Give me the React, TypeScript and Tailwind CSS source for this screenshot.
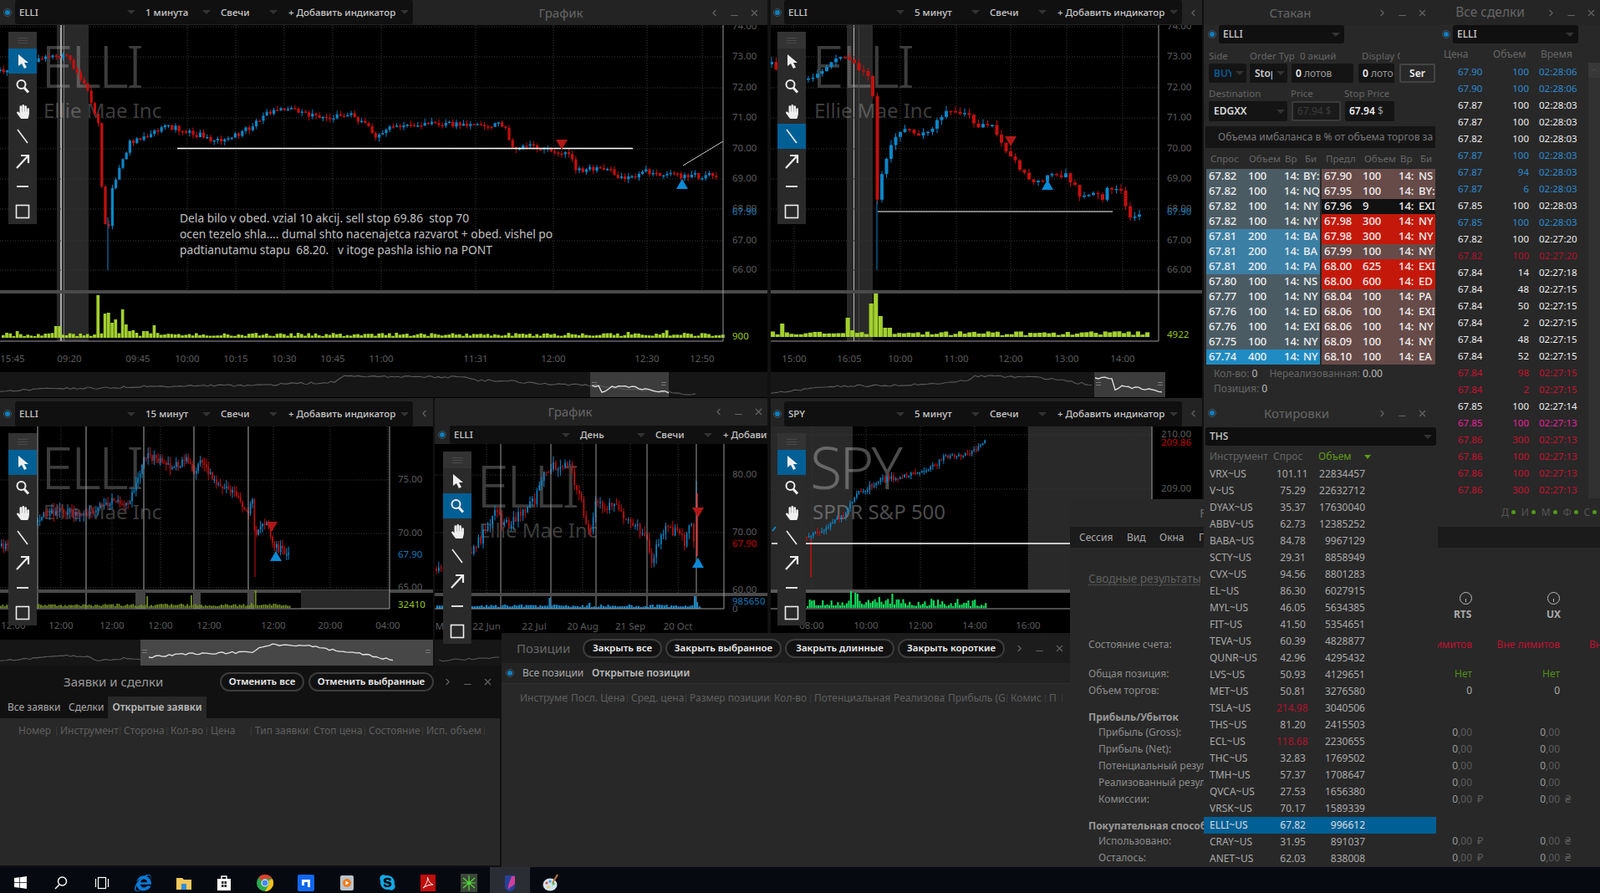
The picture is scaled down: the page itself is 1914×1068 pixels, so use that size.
import { ReactNode } from "react";
import { ChevronLeft, ChevronRight, Minus, X } from "lucide-react";
import { FaWindows, FaInternetExplorer, FaSkype, FaHandPaper } from "react-icons/fa";

type Pt = [number, number];

const BLUE = "#0b86c8";
const RED = "#c40f0f";

function lcg(seed: number) {
  return () => {
    seed = (Math.imul(seed, 1664525) + 1013904223) >>> 0;
    return ((seed >>> 8) % 10000) / 10000;
  };
}

function interp(pts: Pt[], x: number) {
  for (let i = 1; i < pts.length; i++) {
    if (x <= pts[i][0]) {
      const [x0, y0] = pts[i - 1];
      const [x1, y1] = pts[i];
      return y0 + ((y1 - y0) * (x - x0)) / Math.max(x1 - x0, 0.01);
    }
  }
  return pts[pts.length - 1][1];
}

// roughens a hand-placed line so the navigator looks like real price data
function jag(line: string, seed: number) {
  const pts = line.split(" ").map((p) => p.split(",").map(Number) as Pt);
  const r = lcg(seed);
  const out: string[] = [];
  for (let x = pts[0][0]; x <= pts[pts.length - 1][0]; x += 4) {
    out.push(`${x},${(interp(pts, x) + (r() - 0.5) * 2.4).toFixed(1)}`);
  }
  return out.join(" ");
}

function Candles({ pts, step, w, seed, noise, wick }: { pts: Pt[]; step: number; w: number; seed: number; noise: number; wick: number }) {
  const r = lcg(seed);
  const out: ReactNode[] = [];
  let prev = pts[0][1];
  for (let x = pts[0][0]; x <= pts[pts.length - 1][0]; x += step) {
    const c = interp(pts, x) + (r() - 0.5) * noise;
    const top = Math.min(prev, c);
    const bot = Math.max(prev, c);
    const col = c < prev ? BLUE : RED;
    out.push(
      <g key={x}>
        <line x1={x} x2={x} y1={top - r() * wick} y2={bot + r() * wick} stroke={col} strokeWidth={1} />
        <rect x={x - w / 2} y={top} width={w} height={Math.max(bot - top, 1.5)} fill={col} />
      </g>
    );
    prev = c;
  }
  return <g>{out}</g>;
}

function Volume({ x0, x1, step, base, color, seed, amp, peaks }: { x0: number; x1: number; step: number; base: number; color: string; seed: number; amp: number; peaks: Pt[] }) {
  const r = lcg(seed);
  const out: ReactNode[] = [];
  for (let x = x0; x < x1; x += step) {
    let h = 2 + r() * amp;
    for (const p of peaks) if (Math.abs(x - p[0]) <= step / 2) h = p[1];
    out.push(<rect key={x} x={x} y={base - h} width={step - 0.5} height={h} fill={color} />);
  }
  return <g>{out}</g>;
}

function Ax({ x, y, c = "#5c5c5c", a = "start", children }: { x: number; y: number; c?: string; a?: "start" | "middle"; children: ReactNode }) {
  return (
    <text x={x} y={y} fill={c} fontSize={11.5} textAnchor={a} dominantBaseline="middle">
      {children}
    </text>
  );
}

function Tri({ x, y, up }: { x: number; y: number; up?: boolean }) {
  return up ? <polygon points={`${x - 7},${y + 12} ${x + 7},${y + 12} ${x},${y}`} fill="#0b8ad8" /> : <polygon points={`${x - 7},${y} ${x + 7},${y} ${x},${y + 12}`} fill="#b01818" />;
}

function Grid({ xs, ys, x0, x1, y0, y1 }: { xs: number[]; ys: number[]; x0: number; x1: number; y0: number; y1: number }) {
  return (
    <g stroke="#3a3a3a" strokeDasharray="1 2" strokeWidth={1}>
      {ys.map((y) => <line key={y} x1={x0} x2={x1} y1={y} y2={y} />)}
      {xs.map((x) => <line key={x} x1={x} x2={x} y1={y0} y2={y1} />)}
    </g>
  );
}

function Nav({ x, y, w, h, from, to, gray, white, fill = "#3c3c3c" }: { x: number; y: number; w: number; h: number; from: number; to: number; gray: string; white: string; fill?: string }) {
  return (
    <g>
      <rect x={x} y={y} width={w} height={h} fill="#161616" />
      <rect x={from} y={y} width={to - from} height={h} fill={fill} />
      <polyline points={jag(gray, 7)} fill="none" stroke="#5a5a5a" strokeWidth={1.1} />
      <polyline points={jag(white, 13)} fill="none" stroke="#e4e4e4" strokeWidth={1.3} />
      <rect x={from + 2} y={y + 12} width={6} height={1} fill="#777" />
      <rect x={from + 2} y={y + 15} width={6} height={1} fill="#777" />
      <rect x={to - 9} y={y + 12} width={6} height={1} fill="#777" />
      <rect x={to - 9} y={y + 15} width={6} height={1} fill="#777" />
    </g>
  );
}

function Radio() {
  return (
    <span className="flex h-[10px] w-[10px] items-center justify-center rounded-full border border-[#3d5564]">
      <span className="h-[6px] w-[6px] rounded-full bg-[#0f7fc0]" />
    </span>
  );
}

function Caret() {
  return <span className="h-0 w-0 border-x-[5px] border-t-[5px] border-x-transparent border-t-[#333]" />;
}

function Controls({ left }: { left?: boolean }) {
  return (
    <div className="flex items-center gap-[11px] text-[#666]">
      {left ? <ChevronLeft size={13} /> : <ChevronRight size={13} />}
      <Minus size={13} className="translate-y-[3px]" />
      <X size={13} />
    </div>
  );
}

function Selector({ sym, tf, className = "" }: { sym: string; tf: string; className?: string }) {
  const seg = "flex h-full items-center justify-between";
  return (
    <div className={`flex shrink-0 rounded-[3px] bg-[#101010] text-[11.5px] font-medium text-[#c8c8c8] ${className}`}>
      <div className={`${seg} w-[148px] pl-[5px] pr-[4px]`}><span>{sym}</span><Caret /></div>
      <div className={`${seg} w-[90px] pl-[8px] pr-[4px]`}><span>{tf}</span><Caret /></div>
      <div className={`${seg} w-[80px] pl-[8px] pr-[4px]`}><span>Свечи</span><Caret /></div>
      <div className={`${seg} w-[158px] pl-[9px] pr-[5px] whitespace-nowrap`}><span>+ Добавить индикатор</span><Caret /></div>
    </div>
  );
}

function Tool({ i, on }: { i: number; on: boolean }) {
  const icons = [
    <svg key="a" width="20" height="20" viewBox="0 0 20 20"><polygon points="5,2 5,16 9,13 12,19 15,17.5 12,12 17,12" fill="#eee" /></svg>,
    <svg key="b" width="20" height="20" viewBox="0 0 20 20" fill="none" stroke="#eee"><circle cx="8.5" cy="8" r="5" strokeWidth="2" /><line x1="12" y1="12" x2="17" y2="17.5" strokeWidth="3" /></svg>,
    <FaHandPaper key="c" size={17} color="#eee" />,
    <svg key="d" width="20" height="20" viewBox="0 0 20 20"><line x1="4" y1="2" x2="16" y2="18" stroke="#eee" strokeWidth="1.6" /></svg>,
    <svg key="e" width="20" height="20" viewBox="0 0 20 20"><path d="M3 18 L16 4 M8 3 H17 V12" stroke="#eee" strokeWidth="2.2" fill="none" /></svg>,
    <svg key="f" width="20" height="20" viewBox="0 0 20 20"><rect x="3" y="9" width="14" height="2" fill="#ddd" /></svg>,
    <svg key="g" width="20" height="20" viewBox="0 0 20 20"><rect x="2.5" y="2.5" width="15" height="15" fill="none" stroke="#eee" strokeWidth="1.6" /></svg>,
  ];
  return <div className={`flex h-[30px] items-center justify-center ${on ? "bg-[#005f95]" : ""}`}>{icons[i]}</div>;
}

function Toolbar({ className, sel }: { className: string; sel: number }) {
  return (
    <div className={`absolute w-[34px] bg-[#2a2a2a] ${className}`}>
      <div className="flex h-[20px] flex-col items-center justify-center gap-[2px] bg-[#333]">
        <span className="h-px w-[12px] bg-[#4a4a4a]" />
        <span className="h-px w-[12px] bg-[#4a4a4a]" />
        <span className="h-px w-[12px] bg-[#4a4a4a]" />
      </div>
      {[0, 1, 2, 3, 4, 5, 6].map((i) => <Tool key={i} i={i} on={i === sel} />)}
    </div>
  );
}

function Mark({ big, small, className }: { big: string; small: string; className: string }) {
  return (
    <div className={`absolute leading-none text-[#3c3c3c] ${className}`}>
      <div className="-ml-[4px] h-[66px] text-[70px] font-light leading-[66px] tracking-[-3px]">{big}</div>
      <div className="-ml-[1px] mt-[7px] text-[24px] leading-[28px] whitespace-nowrap">{small}</div>
    </div>
  );
}

const stack: [string, string, string, string, string, string, string, string][] = [
  ["67.82", "100", "14:", "BY:", "67.90", "100", "14:", "NS"],
  ["67.82", "100", "14:", "NQ", "67.95", "100", "14:", "BY:"],
  ["67.82", "100", "14:", "NY", "67.96", "9", "14:", "EXI"],
  ["67.82", "100", "14:", "NY", "67.98", "300", "14:", "NY"],
  ["67.81", "200", "14:", "BA", "67.98", "300", "14:", "NY"],
  ["67.81", "200", "14:", "BA", "67.99", "100", "14:", "NY"],
  ["67.81", "200", "14:", "PA", "68.00", "625", "14:", "EXI"],
  ["67.80", "100", "14:", "NS", "68.00", "600", "14:", "ED"],
  ["67.77", "100", "14:", "NY", "68.04", "100", "14:", "PA"],
  ["67.76", "100", "14:", "ED", "68.06", "100", "14:", "EXI"],
  ["67.76", "100", "14:", "EXI", "68.06", "100", "14:", "NY"],
  ["67.75", "100", "14:", "NY", "68.09", "100", "14:", "NY"],
  ["67.74", "400", "14:", "NY", "68.10", "100", "14:", "EA"],
];
const bidBg = ["bg-[#4b5b63]", "bg-[#4b5b63]", "bg-[#4b5b63]", "bg-[#4b5b63]", "bg-[#3b7fa5]", "bg-[#3b7fa5]", "bg-[#3b7fa5]", "bg-[#4b5b63]", "bg-[#4b5b63]", "bg-[#4b5b63]", "bg-[#4b5b63]", "bg-[#4b5b63]", "bg-[#1f8bc2]"];
const askBg = ["bg-[#664b49]", "bg-[#664b49]", "bg-[#111]", "bg-[#c4190a]", "bg-[#c4190a]", "bg-[#664b49]", "bg-[#c4190a]", "bg-[#c4190a]", "bg-[#664b49]", "bg-[#664b49]", "bg-[#664b49]", "bg-[#664b49]", "bg-[#664b49]"];

const trades: [string, string, string, string][] = [
  ["67.90", "100", "02:28:06", "text-[#2b8ad0]"],
  ["67.90", "100", "02:28:06", "text-[#2b8ad0]"],
  ["67.87", "100", "02:28:03", "text-[#eee]"],
  ["67.87", "100", "02:28:03", "text-[#eee]"],
  ["67.82", "100", "02:28:03", "text-[#eee]"],
  ["67.87", "100", "02:28:03", "text-[#2b8ad0]"],
  ["67.87", "94", "02:28:03", "text-[#2b8ad0]"],
  ["67.87", "6", "02:28:03", "text-[#2b8ad0]"],
  ["67.85", "100", "02:28:03", "text-[#eee]"],
  ["67.85", "100", "02:28:03", "text-[#2b8ad0]"],
  ["67.82", "100", "02:27:20", "text-[#eee]"],
  ["67.82", "100", "02:27:20", "text-[#b5102c]"],
  ["67.84", "14", "02:27:18", "text-[#eee]"],
  ["67.84", "48", "02:27:15", "text-[#eee]"],
  ["67.84", "50", "02:27:15", "text-[#eee]"],
  ["67.84", "2", "02:27:15", "text-[#eee]"],
  ["67.84", "48", "02:27:15", "text-[#eee]"],
  ["67.84", "52", "02:27:15", "text-[#eee]"],
  ["67.84", "98", "02:27:15", "text-[#c8102e]"],
  ["67.84", "2", "02:27:15", "text-[#c8102e]"],
  ["67.85", "100", "02:27:14", "text-[#eee]"],
  ["67.85", "100", "02:27:13", "text-[#e8209c]"],
  ["67.86", "300", "02:27:13", "text-[#c8102e]"],
  ["67.86", "100", "02:27:13", "text-[#c8102e]"],
  ["67.86", "100", "02:27:13", "text-[#c8102e]"],
  ["67.86", "300", "02:27:13", "text-[#c8102e]"],
];

const quotes: [string, string, string][] = [
  ["VRX~US", "101.11", "22834457"], ["V~US", "75.29", "22632712"], ["DYAX~US", "35.37", "17630040"], ["ABBV~US", "62.73", "12385252"],
  ["BABA~US", "84.78", "9967129"], ["SCTY~US", "29.31", "8858949"], ["CVX~US", "94.56", "8801283"], ["EL~US", "86.30", "6027915"],
  ["MYL~US", "46.05", "5634385"], ["FIT~US", "41.50", "5354651"], ["TEVA~US", "60.39", "4828877"], ["QUNR~US", "42.96", "4295432"],
  ["LVS~US", "50.93", "4129651"], ["MET~US", "50.81", "3276580"], ["TSLA~US", "214.98", "3040506"], ["THS~US", "81.20", "2415503"],
  ["ECL~US", "118.68", "2230655"], ["THC~US", "32.83", "1769502"], ["TMH~US", "57.37", "1708647"], ["QVCA~US", "27.53", "1656380"],
  ["VRSK~US", "70.17", "1589339"], ["ELLI~US", "67.82", "996612"], ["CRAY~US", "31.95", "891037"], ["ANET~US", "62.03", "838008"],
];

function Field({ className, children }: { className: string; children: ReactNode }) {
  return <div className={`flex h-[23px] items-center overflow-hidden rounded-[2px] bg-[#141414] ${className}`}>{children}</div>;
}

function Stakan() {
  return (
    <div className="absolute left-[1440px] top-0 flex h-[477px] w-[280px] flex-col bg-[#282828] text-[12px] text-[#666]">
      <div className="flex h-[30px] shrink-0 items-center bg-[#252525]">
        <div className="w-[207px] text-center text-[15px]">Стакан</div>
        <Controls />
      </div>
      <div className="flex h-[22px] shrink-0 items-center pl-[5px]">
        <Radio />
        <div className="ml-[3px] flex h-[22px] w-[150px] items-center justify-between rounded-[3px] bg-[#101010] px-[5px] font-medium text-[#ccc]"><span>ELLI</span><Caret /></div>
      </div>
      <div className="mt-[7px] flex h-[16px] shrink-0 items-center whitespace-nowrap text-[11.5px]">
        <div className="w-[55px] pl-[6px]">Side</div>
        <div className="w-[55px] overflow-hidden">Order Typ</div>
        <div className="ml-[5px] w-[74px]">0 акций</div>
        <div className="w-[46px] overflow-hidden">Display C</div>
      </div>
      <div className="mt-[1px] flex shrink-0 items-center pl-[6px] text-[12px] font-semibold">
        <Field className="w-[45px] justify-between pl-[6px] pr-[3px] text-[#055a90]"><span className="w-[21px] overflow-hidden">BUY</span><Caret /></Field>
        <Field className="ml-[4px] w-[45px] justify-between pl-[6px] pr-[3px] text-[#ccc]"><span className="w-[21px] overflow-hidden">Stop</span><Caret /></Field>
        <Field className="ml-[5px] w-[74px] pl-[5px] text-[#eee]">0&nbsp;<span className="font-normal text-[#999]">лотов</span></Field>
        <Field className="ml-[6px] w-[43px] pl-[5px] text-[#eee]">0&nbsp;<span className="font-normal text-[#999]">лото</span></Field>
        <div className="ml-[6px] flex h-[23px] w-[43px] items-center justify-center rounded-[2px] border-2 border-[#444] text-[#eee]">Ser</div>
      </div>
      <div className="mt-[5px] flex h-[16px] shrink-0 items-center text-[11.5px]">
        <div className="w-[104px] pl-[6px]">Destination</div>
        <div className="w-[64px]">Price</div>
        <div>Stop Price</div>
      </div>
      <div className="mt-[1px] flex shrink-0 items-center pl-[6px] font-semibold">
        <Field className="h-[24px] w-[94px] justify-between pl-[6px] pr-[3px] text-[#ddd]"><span>EDGXX</span><Caret /></Field>
        <div className="ml-[5px] flex h-[24px] w-[59px] items-center rounded-[2px] border-2 border-[#3a3a3a] bg-[#1a1a1a] pl-[5px] font-normal text-[#3a3a3a]">67.94 $</div>
        <Field className="ml-[5px] h-[24px] w-[59px] pl-[5px] text-[#eee]">67.94&nbsp;<span className="font-normal text-[#999]">$</span></Field>
      </div>
      <div className="ml-[2px] mt-[6px] flex h-[26px] w-[275px] shrink-0 items-center overflow-hidden whitespace-nowrap bg-[#151515] pl-[15px] text-[#777]">Объема имбаланса в % от объема торгов за день</div>
      <div className="mt-[4px] flex h-[18px] shrink-0 items-center whitespace-nowrap text-[11.5px]">
        <div className="w-[54px] pl-[8px]">Спрос</div>
        <div className="w-[43px] overflow-hidden">Объем</div>
        <div className="w-[24px]">Вр</div>
        <div className="w-[25px]">Би</div>
        <div className="w-[46px] overflow-hidden">Предл</div>
        <div className="w-[43px] overflow-hidden">Объем</div>
        <div className="w-[24px]">Вр</div>
        <div>Би</div>
      </div>
      <div className="mt-[3px] flex shrink-0 flex-col text-[13px] font-medium text-[#eee]">
        {stack.map((r, i) => (
          <div key={i} className="flex h-[18px] items-center whitespace-nowrap pl-[3px]">
            <div className={`flex h-full w-[136px] items-center overflow-hidden pl-[3px] ${bidBg[i]}`}>
              <span className="w-[47px]">{r[0]}</span><span className="w-[43px]">{r[1]}</span><span className="w-[23px]">{r[2]}</span><span>{r[3]}</span>
            </div>
            <div className={`ml-[2px] flex h-full w-[136px] items-center overflow-hidden pl-[3px] ${askBg[i]}`}>
              <span className="w-[46px]">{r[4]}</span><span className="w-[43px]">{r[5]}</span><span className="w-[24px]">{r[6]}</span><span>{r[7]}</span>
            </div>
          </div>
        ))}
      </div>
      <div className="mt-[2px] flex h-[18px] items-center gap-[14px] pl-[12px]">
        <span>Кол-во: <span className="text-[#bbb]">0</span></span>
        <span>Нереализованная: <span className="text-[#bbb]">0.00</span></span>
      </div>
      <div className="flex h-[18px] items-center pl-[12px]">Позиция:&nbsp;<span className="text-[#bbb]">0</span></div>
    </div>
  );
}

function Quotes() {
  return (
    <div className="absolute left-[1440px] top-[477px] flex h-[560px] w-[280px] flex-col bg-[#282828] text-[12px] text-[#aaa]">
      <div className="flex h-[34px] shrink-0 items-center pl-[5px] text-[#666]">
        <Radio />
        <div className="w-[192px] text-center text-[15px]">Котировки</div>
        <Controls />
      </div>
      <div className="ml-[2px] flex h-[22px] w-[276px] shrink-0 items-center justify-between rounded-[3px] bg-[#0f0f0f] px-[5px] font-medium text-[#ccc]"><span>THS</span><Caret /></div>
      <div className="mt-[2px] flex h-[22px] shrink-0 items-center text-[#666]">
        <span className="w-[83px] pl-[7px]">Инструмент</span>
        <span className="w-[54px]">Спрос</span>
        <span className="w-[55px] text-[#5f9a14]">Объем</span>
        <span className="h-0 w-0 border-x-[4px] border-t-[5px] border-x-transparent border-t-[#5f9a14]" />
      </div>
      <div className="flex flex-col">
        {quotes.map((q) => {
          const sel = q[0] === "ELLI~US";
          const hot = q[0] === "TSLA~US" || q[0] === "ECL~US";
          return (
            <div key={q[0]} className={`mr-[2px] flex h-[20px] items-center pl-[7px] ${sel ? "bg-[#005f95] text-[#ddd]" : ""}`}>
              <span className="w-[80px]">{q[0]}</span>
              <span className={`w-[35px] text-right ${hot ? "text-[#b5102c]" : ""}`}>{q[1]}</span>
              <span className="w-[71px] text-right">{q[2]}</span>
            </div>
          );
        })}
      </div>
    </div>
  );
}

function AllTrades() {
  return (
    <div className="absolute left-[1720px] top-0 flex h-[630px] w-[194px] flex-col bg-[#282828] text-[#666]">
      <div className="flex h-[30px] shrink-0 items-center bg-[#252525]">
        <div className="w-[125px] text-center text-[15.5px]">Все сделки</div>
        <div className="pl-[4px]"><Controls /></div>
      </div>
      <div className="flex h-[22px] shrink-0 items-center pl-[5px] text-[12px]">
        <Radio />
        <div className="ml-[3px] flex h-[22px] w-[150px] items-center justify-between rounded-[3px] bg-[#101010] px-[5px] font-medium text-[#ccc]"><span>ELLI</span><Caret /></div>
      </div>
      <div className="mt-[3px] flex h-[20px] shrink-0 items-center text-[12px]">
        <span className="w-[66px] pl-[7px]">Цена</span>
        <span className="w-[57px]">Объем</span>
        <span>Время</span>
      </div>
      <div className="flex h-[521px] shrink-0">
        <div className="flex w-[180px] flex-col pt-[1px]">
          {trades.map((t, i) => (
            <div key={i} className={`flex h-[20px] shrink-0 items-center text-[11.5px] ${t[3]}`}>
              <span className="ml-[24px] w-[30px]">{t[0]}</span>
              <span className="w-[55px] text-right">{t[1]}</span>
              <span className="ml-[12px]">{t[2]}</span>
            </div>
          ))}
        </div>
        <div className="w-[14px] bg-[#313131]">
          <div className="flex h-[18px] items-center justify-center bg-[#383838]"><ChevronLeft size={12} className="rotate-90 text-[#4c4c4c]" /></div>
        </div>
      </div>
      <div className="flex h-[33px] items-center gap-[7px] whitespace-nowrap pl-[76px] text-[12px] text-[#555]">
        {["Д", "И", "М", "Ф", "С"].map((l) => (
          <span key={l} className="flex items-center gap-[3px]">{l}<span className="h-[5px] w-[5px] rounded-full bg-[#4f9a16]" /></span>
        ))}
      </div>
    </div>
  );
}

function Dial() {
  return (
    <div className="flex h-[15px] w-[15px] items-end justify-center rounded-full border-[1.5px] border-[#bbb] pb-[2px]">
      <span className="h-[4px] w-px bg-[#bbb]" />
    </div>
  );
}

function Val({ v }: { v?: string }) {
  if (v === "0,00") return <span><span className="text-[#9a9a9a]">0</span><span className="text-[#5c5c5c]">,00</span></span>;
  return <span>{v}</span>;
}

function AcctRow({ label, mt = "", bold, ind, a, b, c, cls = "", sa = "", sb = "" }: { label?: string; mt?: string; bold?: boolean; ind?: boolean; a?: string; b?: string; c?: string; cls?: string; sa?: string; sb?: string }) {
  return (
    <div className={`flex h-[20px] shrink-0 items-center ${mt}`}>
      <div className={`w-[138px] shrink-0 overflow-hidden whitespace-nowrap ${ind ? "pl-[12px]" : ""} ${bold ? "font-bold text-[#999]" : "text-[#8c8c8c]"}`}>{label}</div>
      <div className="w-[280px] shrink-0" />
      <div className={`flex w-[41px] shrink-0 justify-end whitespace-nowrap ${cls}`}><Val v={a} /></div>
      <div className="w-[41px] shrink-0 pl-[6px] text-[13px] text-[#5c5c5c]">{sa}</div>
      <div className={`flex w-[64px] shrink-0 justify-end whitespace-nowrap ${cls}`}><Val v={b} /></div>
      <div className="w-[35px] shrink-0 pl-[6px] text-[13px] text-[#5c5c5c]">{sb}</div>
      {c ? <div className={`whitespace-nowrap ${cls}`}>{c}</div> : null}
    </div>
  );
}

function Account() {
  return (
    <div className="absolute left-[1280px] top-[597px] flex h-[440px] w-[634px] flex-col overflow-hidden bg-[#282828] text-[12px]">
      <div className="flex h-[33px] shrink-0 items-center pl-[155px] text-[#666]">
        <span className="text-[15px]">F</span>
      </div>
      <div className="flex h-[25px] shrink-0 items-center bg-[#1b1b1b] pl-[11px] text-[#aaa]">
        <span className="w-[57px]">Сессия</span>
        <span className="w-[39px]">Вид</span>
        <span className="w-[47px]">Окна</span>
        <span>Г</span>
      </div>
      <div className="flex flex-col pl-[22px]">
        <div className="mt-[27px] flex h-[20px] items-center whitespace-nowrap text-[13.5px] text-[#5f5f5f] underline decoration-dotted underline-offset-2">Сводные результаты</div>
        <div className="mt-[3px] flex h-[20px] items-center gap-[90px] pl-[444px]">
          <Dial />
          <Dial />
        </div>
        <div className="flex h-[20px] items-center pl-[437px] font-bold text-[#aaa]">
          <span className="w-[111px]">RTS</span>
          <span>UX</span>
        </div>
        <AcctRow mt="mt-[16px]" label="Состояние счета:" a="Вне лимитов" b="Вне лимитов" c="Вне лимитов" cls="text-[#c01030]" />
        <AcctRow mt="mt-[15px]" label="Общая позиция:" a="Нет" b="Нет" cls="text-[#4f8f14]" />
        <AcctRow label="Объем торгов:" a="0" b="0" cls="text-[#aaa]" />
        <AcctRow mt="mt-[12px]" label="Прибыль/Убыток" bold />
        <AcctRow mt="-mt-[2px]" ind label="Прибыль (Gross):" a="0,00" b="0,00" />
        <AcctRow ind label="Прибыль (Net):" a="0,00" b="0,00" />
        <AcctRow ind label="Потенциальный результат" a="0,00" b="0,00" />
        <AcctRow ind label="Реализованный результат" a="0,00" b="0,00" />
        <AcctRow ind label="Комиссии:" a="0,00" b="0,00" sa="₽" sb="₴" />
        <AcctRow mt="mt-[12px]" label="Покупательная способность" bold />
        <AcctRow mt="-mt-[2px]" ind label="Использовано:" a="0,00" b="0,00" sa="₽" sb="₴" />
        <AcctRow ind label="Осталось:" a="0,00" b="0,00" sa="₽" sb="₴" />
      </div>
    </div>
  );
}

function Pill({ w, children }: { w: string; children: ReactNode }) {
  return <div className={`flex h-[23px] items-center justify-center whitespace-nowrap rounded-full border-2 border-[#3c3c3c] bg-[#111] text-[11.5px] font-semibold text-[#eee] ${w}`}>{children}</div>;
}

function Col({ w, children }: { w: string; children: ReactNode }) {
  return (
    <div className={`flex shrink-0 items-center justify-between pr-[4px] ${w}`}>
      <span className="overflow-hidden">{children}</span>
      <span className="h-[9px] shrink-0 border-r border-dotted border-[#4a4a4a]" />
    </div>
  );
}

function Positions() {
  const cols: [string, string][] = [["Инструме", "w-[61px]"], ["Посл. Цена", "w-[72px]"], ["Сред. цена", "w-[70px]"], ["Размер позиции", "w-[101px]"], ["Кол-во", "w-[48px]"], ["Потенциальная", "w-[95px]"], ["Реализова", "w-[65px]"], ["Прибыль (G", "w-[75px]"], ["Комис", "w-[46px]"], ["П", "w-[20px]"]];
  return (
    <div className="absolute left-[600px] top-[757px] flex h-[280px] w-[680px] flex-col bg-[#282828] text-[12px]">
      <div className="flex h-[36px] shrink-0 items-center bg-[#1c1c1c] pl-[18px]">
        <span className="w-[79px] text-[15px] text-[#666]">Позиции</span>
        <div className="flex gap-[4px]">
          <Pill w="w-[95px]">Закрыть все</Pill>
          <Pill w="w-[139px]">Закрыть выбранное</Pill>
          <Pill w="w-[131px]">Закрыть длинные</Pill>
          <Pill w="w-[128px]">Закрыть короткие</Pill>
        </div>
        <div className="ml-[11px]"><Controls /></div>
      </div>
      <div className="flex h-[25px] shrink-0 items-center border-b border-[#303030] bg-[#232323] pl-[5px] text-[#aaa]">
        <Radio />
        <span className="ml-[10px] w-[83px]">Все позиции</span>
        <span className="font-semibold text-[#bbb]">Открытые позиции</span>
      </div>
      <div className="mt-[8px] flex h-[18px] items-center overflow-hidden whitespace-nowrap pl-[22px] text-[#5f5f5f]">
        {cols.map((c) => <Col key={c[0]} w={c[1]}>{c[0]}</Col>)}
      </div>
    </div>
  );
}

function Orders() {
  const cols: [string, string][] = [["Номер", "w-[50px]"], ["Инструмент", "w-[76px]"], ["Сторона", "w-[56px]"], ["Кол-во", "w-[48px]"], ["Цена", "w-[53px]"], ["Тип заявки", "w-[70px]"], ["Стоп цена", "w-[66px]"], ["Состояние", "w-[69px]"], ["Исп. объем", "w-[74px]"]];
  return (
    <div className="absolute left-0 top-[797px] flex h-[238px] w-[598px] flex-col bg-[#282828] text-[12px]">
      <div className="flex h-[36px] shrink-0 items-center bg-[#111] pl-[76px]">
        <span className="w-[187px] text-[15px] text-[#999]">Заявки и сделки</span>
        <div className="flex gap-[5px]">
          <Pill w="w-[101px]">Отменить все</Pill>
          <Pill w="w-[150px]">Отменить выбранные</Pill>
        </div>
        <div className="ml-[10px]"><Controls /></div>
      </div>
      <div className="flex h-[26px] shrink-0 items-center bg-[#111] pl-[9px] text-[#aaa]">
        <span className="w-[73px]">Все заявки</span>
        <span className="w-[47px]">Сделки</span>
        <span className="flex h-full w-[118px] items-center justify-center bg-[#282828] font-semibold text-[#bbb]">Открытые заявки</span>
      </div>
      <div className="mt-[6px] flex h-[18px] items-center whitespace-nowrap pl-[22px] text-[#5f5f5f]">
        {cols.map((c) => <Col key={c[0]} w={c[1]}>{c[0]}</Col>)}
      </div>
    </div>
  );
}

function Chart1() {
  const pts: Pt[] = [[0,85],[20,78],[40,75],[60,67],[78,66],[92,85],[105,110],[118,150],[124,265],[130,275],[135,222],[145,195],[155,170],[175,165],[195,150],[215,155],[250,165],[265,170],[295,155],[320,135],[340,130],[365,135],[395,142],[415,135],[440,150],[450,165],[470,150],[530,148],[600,150],[606,155],[612,175],[640,176],[660,178],[670,185],[680,180],[690,205],[720,200],[750,215],[770,205],[800,210],[860,210]];
  return (
    <svg className="relative h-full w-full" viewBox="0 30 918 446">
      <rect x="68" y="30" width="38" height="378" fill="#fff" fillOpacity="0.16" />
      <rect x="72" y="30" width="2" height="378" fill="#aaa" />
      <rect x="76" y="30" width="1" height="378" fill="#777" />
      <Grid xs={[224,282,340,398,456,569,662,774,840]} ys={[32,68,105,141,178,214,250,288,323]} x0={0} x1={865} y0={30} y1={349} />
      <Candles pts={pts} step={4.2} w={3.2} seed={11} noise={7} wick={5} />
      <line x1="129" x2="129" y1="260" y2="323" stroke={BLUE} />
      <line x1="212" x2="757" y1="177.5" y2="177.5" stroke="#fff" strokeWidth="1.5" />
      <line x1="817" x2="865" y1="198" y2="169" stroke="#ccc" />
      <Tri x={672} y={167} />
      <Tri x={816} y={214} up />
      <text fill="#c0c0c0" fontSize="13.8" className="whitespace-pre">
        <tspan x="215" y="266">Dela bilo v obed. vzial 10 akcij. sell stop 69.86  stop 70</tspan>
        <tspan x="215" y="285">ocen tezelo shla.... dumal shto nacenajetca razvarot + obed. vishel po</tspan>
        <tspan x="215" y="304">padtianutamu stapu  68.20.   v itoge pashla ishio na PONT</tspan>
      </text>
      <rect x="0" y="347" width="918" height="4" fill="#4a4a4a" />
      <Volume x0={2} x1={865} step={4.2} base={404} color="#a2d02e" seed={5} amp={4} peaks={[[117,51],[122,29],[126,24],[130,30],[134,18],[138,22],[143,34],[147,16],[152,8],[156,9],[160,6],[170,8],[175,8],[183,15],[65,14],[69,14],[8,6],[17,8],[795,9],[750,6],[473,6],[748,7]]} />
      <polyline points="865,30 865,408 0,408" fill="none" stroke="#9a9a9a" />
      {[["74.00",32],["73.00",68],["72.00",105],["71.00",141],["70.00",178],["69.00",214],["68.00",250],["67.00",288],["66.00",323]].map((a) => <Ax key={a[0]} x={876} y={a[1] as number}>{a[0]}</Ax>)}
      <Ax x={876} y={254} c="#1679b8">67.90</Ax>
      <Ax x={876} y={403} c="#9ac81e">900</Ax>
      {[["15:45",15],["09:20",83],["09:45",165],["10:00",224],["10:15",282],["10:30",340],["10:45",398],["11:00",456],["11:31",569],["12:00",662],["12:30",774],["12:50",840]].map((a) => <Ax key={a[0]} x={a[1] as number} y={430} a="middle">{a[0]}</Ax>)}
      <Nav x={0} y={445} w={918} h={30} from={706} to={800} gray="0,468 60,465 120,464 180,462 300,461 400,457 410,450 560,451 570,455 600,455 650,459 706,461 800,469 835,472" white="708,461 716,462 720,470 730,463 750,462 770,465 790,468 800,469" />
    </svg>
  );
}

function Chart2() {
  const pts: Pt[] = [[923,77],[928,85],[965,95],[985,85],[1000,70],[1010,67],[1030,85],[1040,90],[1046,130],[1048,245],[1054,210],[1060,190],[1065,175],[1075,160],[1085,155],[1100,165],[1112,155],[1125,140],[1130,132],[1145,135],[1160,140],[1170,150],[1187,150],[1197,172],[1205,180],[1215,195],[1230,215],[1240,218],[1255,210],[1275,210],[1285,220],[1290,235],[1310,232],[1320,240],[1325,225],[1340,225],[1345,245],[1355,265],[1360,255],[1368,255]];
  return (
    <svg className="relative h-full w-full" viewBox="922 30 516 446">
      <rect x="1013" y="30" width="31" height="378" fill="#fff" fillOpacity="0.16" />
      <rect x="1021" y="30" width="1" height="378" fill="#bbb" />
      <rect x="1027" y="30" width="1" height="378" fill="#444" />
      <Grid xs={[950,1016,1077,1144,1209,1276,1343]} ys={[32,68,105,141,178,214,250,288,323]} x0={922} x1={1386} y0={30} y1={349} />
      <Candles pts={pts} step={5.5} w={4} seed={23} noise={6} wick={6} />
      <line x1="1049" x2="1049" y1="240" y2="323" stroke={BLUE} />
      <line x1="1050" x2="1331" y1="253" y2="253" stroke="#fff" />
      <Tri x={1209} y={163} />
      <Tri x={1253} y={215} up />
      <rect x="922" y="347" width="516" height="4" fill="#4a4a4a" />
      <Volume x0={922} x1={1370} step={5.6} base={403} color="#a2d02e" seed={9} amp={5} peaks={[[932,16],[1009,23],[1015,8],[1040,40],[1045,52],[1051,25],[1058,11],[1063,11],[1273,6]]} />
      <polyline points="1386,30 1386,408 922,408" fill="none" stroke="#9a9a9a" />
      {[["74.00",32],["73.00",68],["72.00",105],["71.00",141],["70.00",178],["69.00",214],["68.00",250],["67.00",288],["66.00",323]].map((a) => <Ax key={a[0]} x={1396} y={a[1] as number}>{a[0]}</Ax>)}
      <Ax x={1396} y={254} c="#1679b8">67.90</Ax>
      <Ax x={1396} y={401} c="#9ac81e">4922</Ax>
      {[["15:00",950],["16:05",1016],["10:00",1077],["11:00",1144],["12:00",1209],["13:00",1276],["14:00",1343]].map((a) => <Ax key={a[0]} x={a[1] as number} y={430} a="middle">{a[0]}</Ax>)}
      <Nav x={922} y={445} w={472} h={30} from={1309} to={1394} gray="922,470 1000,462 1100,460 1160,455 1165,450 1240,451 1290,458 1309,460" white="1310,452 1330,452 1333,468 1340,462 1370,465 1392,468" />
    </svg>
  );
}

function Chart3() {
  const pts: Pt[] = [[2,653],[20,650],[45,620],[70,610],[100,615],[132,600],[155,600],[162,580],[172,550],[175,545],[190,550],[205,560],[225,549],[232,565],[240,549],[260,580],[285,590],[295,615],[302,600],[305,640],[312,625],[320,630],[330,655],[345,660],[346,670]];
  return (
    <svg className="relative h-full w-full" viewBox="0 510 518 286">
      <Grid xs={[73,134,192,250,327,395,464]} ys={[574,638,703]} x0={0} x1={466} y0={510} y1={706} />
      <Candles pts={pts} step={2.4} w={1.6} seed={31} noise={9} wick={8} />
      <line x1="305" x2="305" y1="630" y2="690" stroke={RED} />
      {[45,103,172,232,297].map((x) => <line key={x} x1={x} x2={x} y1={510} y2={728} stroke="#aaa" />)}
      <Tri x={325} y={624} />
      <Tri x={330} y={659} up />
      <rect x="0" y="705" width="518" height="4" fill="#4a4a4a" />
      <rect x="162" y="706" width="12" height="22" fill="#444" />
      <rect x="232" y="706" width="8" height="22" fill="#444" />
      <rect x="297" y="706" width="7" height="22" fill="#444" />
      <rect x="360" y="706" width="106" height="22" fill="#2a2a2a" />
      <Volume x0={0} x1={347} step={2.4} base={727} color="#6f8a26" seed={17} amp={3} peaks={[[175,14],[228,15],[304,21],[300,6],[60,4]]} />
      <polyline points="466,510 466,728 0,728" fill="none" stroke="#9a9a9a" />
      <Ax x={476} y={574}>75.00</Ax>
      <Ax x={476} y={638}>70.00</Ax>
      <Ax x={476} y={664} c="#1679b8">67.90</Ax>
      <Ax x={476} y={703}>65.00</Ax>
      <Ax x={476} y={724} c="#9ac81e">32410</Ax>
      {[[16,"12:00"],[73,"12:00"],[134,"12:00"],[192,"12:00"],[250,"12:00"],[327,"12:00"],[395,"20:00"],[464,"04:00"]].map((a) => <Ax key={a[0]} x={a[0] as number} y={749} a="middle">{a[1]}</Ax>)}
      <Nav x={0} y={765} w={518} h={31} from={168} to={518} fill="#474747" gray="0,790 50,787 75,784 100,785 120,790 150,787 168,788" white="178,786 220,782 300,780 320,771 370,772 400,778 440,783 470,790" />
    </svg>
  );
}

function Chart4() {
  const pts: Pt[] = [[522,680],[540,690],[565,660],[575,645],[590,615],[610,630],[620,615],[640,600],[655,560],[680,550],[695,600],[705,640],[712,600],[740,610],[760,625],[775,650],[780,675],[790,640],[800,630],[820,650],[826,620],[830,650]];
  return (
    <svg className="relative h-full w-full" viewBox="520 531 398 265">
      <Grid xs={[582,639,697,754,811]} ys={[568,637,706]} x0={520} x1={866} y0={531} y1={711} />
      <Candles pts={pts} step={2.8} w={1.6} seed={41} noise={14} wick={8} />
      <line x1="833" x2="833" y1="575" y2="610" stroke={BLUE} />
      <line x1="834" x2="834" y1="590" y2="665" stroke={RED} strokeWidth="2" />
      {[599,659,713,774,833].map((x) => <line key={x} x1={x} x2={x} y1={531} y2={728} stroke="#999" />)}
      <Tri x={835} y={607} />
      <Tri x={835} y={667} up />
      <rect x="520" y="709" width="398" height="4" fill="#4a4a4a" />
      <Volume x0={522} x1={838} step={2.8} base={728} color="#1c8ac8" seed={7} amp={3} peaks={[[657,13],[830,15],[833,8],[703,7]]} />
      <polyline points="866,531 866,728 520,728" fill="none" stroke="#9a9a9a" />
      <Ax x={876} y={568}>80.00</Ax>
      <Ax x={876} y={637}>70.00</Ax>
      <Ax x={876} y={651} c="#c00000">67.90</Ax>
      <Ax x={876} y={706}>60.00</Ax>
      <Ax x={876} y={720} c="#1679b8">985650</Ax>
      <Ax x={876} y={729}>0</Ax>
      {[["M",526],["22 Jun",582],["22 Jul",639],["20 Aug",697],["21 Sep",754],["20 Oct",811]].map((a) => <Ax key={a[0]} x={a[1] as number} y={750} a="middle">{a[0]}</Ax>)}
      <rect x="520" y="765" width="398" height="31" fill="#161616" />
      <polyline points={jag("525,790 560,788 600,786", 3)} fill="none" stroke="#5a5a5a" />
    </svg>
  );
}

function Chart5() {
  const pts: Pt[] = [[965,642],[985,635],[997,625],[1007,618],[1027,590],[1052,575],[1077,570],[1107,565],[1132,545],[1157,545],[1179,528]];
  return (
    <svg className="relative h-full w-full" viewBox="922 510 516 286">
      <rect x="922" y="510" width="98" height="196" fill="#fff" fillOpacity="0.16" />
      <rect x="1230" y="510" width="148" height="196" fill="#fff" fillOpacity="0.16" />
      <Grid xs={[971,1036,1101,1166,1230]} ys={[520,585]} x0={922} x1={1378} y0={510} y1={706} />
      <polyline points="924,635 928,630" stroke={BLUE} fill="none" strokeWidth="2" />
      <Candles pts={pts} step={2.6} w={1.6} seed={53} noise={6} wick={5} />
      <line x1="970" x2="970" y1="645" y2="690" stroke={RED} strokeWidth="1.5" />
      <line x1="964" x2="1280" y1="650" y2="650" stroke="#fff" strokeWidth="1.5" />
      <line x1="923" x2="930" y1="650" y2="650" stroke="#fff" strokeWidth="1.5" />
      <rect x="922" y="705" width="516" height="4" fill="#5a5a5a" />
      <Volume x0={965} x1={1180} step={2.6} base={727} color="#12e060" seed={3} amp={9} peaks={[[1018,20],[1021,18],[1026,17],[1066,17],[1050,13],[1071,10],[985,3],[975,3],[980,3],[990,3],[995,3],[1000,3],[1005,3],[1010,3]]} />
      <polyline points="1378,510 1378,728 922,728" fill="none" stroke="#9a9a9a" />
      <Ax x={1389} y={520}>210.00</Ax>
      <Ax x={1389} y={530} c="#c00000">209.86</Ax>
      <Ax x={1389} y={585}>209.00</Ax>
      {[["08:00",971],["10:00",1036],["12:00",1101],["14:00",1166],["16:00",1230]].map((a) => <Ax key={a[0]} x={a[1] as number} y={749} a="middle">{a[0]}</Ax>)}
    </svg>
  );
}

function Taskbar() {
  const cell = "flex h-full w-[48.8px] items-center justify-center pt-[6px]";
  return (
    <div className="absolute left-0 top-[1037px] flex h-[31px] w-[1914px] bg-[#060a10]">
      <div className={cell}><FaWindows size={17} color="#fff" /></div>
      <div className={cell}>
        <svg width="18" height="18" viewBox="0 0 18 18" fill="none" stroke="#fff" strokeWidth="1.4"><circle cx="10.5" cy="7" r="5" /><line x1="7" y1="11" x2="2" y2="16" /></svg>
      </div>
      <div className={cell}>
        <svg width="20" height="16" viewBox="0 0 20 16" fill="none" stroke="#fff" strokeWidth="1.2"><rect x="5.5" y="1.5" width="9" height="13" /><line x1="2.5" y1="3" x2="2.5" y2="13" /><line x1="17.5" y1="3" x2="17.5" y2="13" /></svg>
      </div>
      <div className={cell}><FaInternetExplorer size={20} color="#0c79d6" /></div>
      <div className={cell}>
        <svg width="20" height="18" viewBox="0 0 20 18"><path d="M1 3 H8 L10 5 H19 V17 H1 Z" fill="#f3c85b" /><rect x="7" y="10" width="6" height="7" fill="#2f8fd8" /></svg>
      </div>
      <div className={cell}>
        <svg width="18" height="20" viewBox="0 0 18 20"><rect x="1" y="5" width="16" height="14" fill="#fff" /><path d="M6 5 V2 H12 V5" fill="none" stroke="#fff" strokeWidth="1.4" /><rect x="6" y="8" width="2.5" height="3" fill="#111" /><rect x="9.5" y="8" width="2.5" height="3" fill="#111" /><rect x="6" y="12" width="2.5" height="3" fill="#111" /><rect x="9.5" y="12" width="2.5" height="3" fill="#111" /></svg>
      </div>
      <div className={cell}>
        <svg width="20" height="20" viewBox="0 0 20 20">
          <circle cx="10" cy="10" r="10" fill="#2da94f" />
          <path d="M10 0 A10 10 0 0 1 18.7 5 L10 5 A5 5 0 0 0 5.7 7.5 L2.6 3.3 A10 10 0 0 1 10 0 Z" fill="#de4032" />
          <path d="M18.7 5 A10 10 0 0 1 10 20 L14.3 12.5 A5 5 0 0 0 14.3 7.5 Z" fill="#f6c21c" />
          <circle cx="10" cy="10" r="4.4" fill="#fff" />
          <circle cx="10" cy="10" r="3.4" fill="#4285f4" />
        </svg>
      </div>
      <div className={cell}>
        <svg width="20" height="20" viewBox="0 0 20 20"><rect width="20" height="20" rx="2" fill="#1166ee" /><path d="M5 13 V6 H15 V15 H12 V9 H8 V13 Z" fill="#fff" /></svg>
      </div>
      <div className={cell}>
        <svg width="20" height="20" viewBox="0 0 20 20"><rect x="2" y="1" width="16" height="18" rx="2" fill="#b9c4cc" /><circle cx="10" cy="10" r="5" fill="#f07a1a" /><polygon points="8.5,7.5 8.5,12.5 12.5,10" fill="#fff" /></svg>
      </div>
      <div className={cell}><FaSkype size={21} color="#12a8e8" /></div>
      <div className={cell}>
        <svg width="18" height="20" viewBox="0 0 18 20"><rect width="18" height="20" fill="#c00d0d" /><path d="M3 16 C7 12 9 7 8.5 3 C9.5 8 12 11 15 12 C11 12 7 13 3 16 Z" fill="none" stroke="#fff" strokeWidth="1" /></svg>
      </div>
      <div className={cell}>
        <svg width="20" height="22" viewBox="0 0 20 22"><rect width="20" height="22" fill="#3c463a" /><path d="M10 2 V20 M3 5 L17 17 M17 5 L3 17 M2 11 H18" stroke="#54dc3a" strokeWidth="1.2" /></svg>
      </div>
      <div className={`${cell} bg-[#2a2d33]`}>
        <svg width="16" height="22" viewBox="0 0 16 22"><path d="M2 2 H14 V15 C14 19 10 21 8 21 C6 21 2 19 2 15 Z" fill="#27409a" /><path d="M10 3 H14 V12 C12 15 8 15 6 19 C5 14 8 10 10 3 Z" fill="#cf3f98" /></svg>
      </div>
      <div className={cell}>
        <svg width="22" height="22" viewBox="0 0 22 22"><ellipse cx="10" cy="13" rx="8.5" ry="7.5" fill="#cfe2ef" /><circle cx="6" cy="11" r="1.6" fill="#e34b3a" /><circle cx="10" cy="9" r="1.6" fill="#3a9be3" /><circle cx="14" cy="12" r="1.6" fill="#4bbf4a" /><circle cx="8" cy="16" r="1.6" fill="#f2c13a" /><path d="M13 11 L19 1" stroke="#b97a3a" strokeWidth="2" /></svg>
      </div>
    </div>
  );
}

export default function App() {
  return (
    <div className="relative h-[1068px] w-[1914px] overflow-hidden bg-[#111] font-['Open_Sans','Noto_Sans',sans-serif]">
      {/* 1 минута */}
      <div className="absolute left-0 top-0 flex h-[476px] w-[918px] flex-col bg-black">
        <div className="flex h-[30px] shrink-0 items-center bg-[#232323]">
          <div className="flex w-[18px] shrink-0 justify-center"><Radio /></div>
          <Selector sym="ELLI" tf="1 минута" className="h-[29px] self-start" />
          <div className="w-[354px] text-center text-[15px] text-[#666]">График</div>
          <Controls left />
        </div>
        <div className="relative flex-1 overflow-hidden">
          <Mark big="ELLI" small="Ellie Mae Inc" className="left-[53px] top-[15px]" />
          <Chart1 />
          <Toolbar className="left-[10px] top-[8px]" sel={0} />
        </div>
      </div>

      {/* 5 минут */}
      <div className="absolute left-[922px] top-0 flex h-[476px] w-[516px] flex-col bg-black">
        <div className="flex h-[30px] shrink-0 items-center bg-[#232323]">
          <div className="flex w-[16px] shrink-0 justify-center"><Radio /></div>
          <Selector sym="ELLI" tf="5 минут" className="h-[29px] self-start" />
          <ChevronLeft size={13} className="ml-[7px] text-[#666]" />
        </div>
        <div className="relative flex-1 overflow-hidden">
          <Mark big="ELLI" small="Ellie Mae Inc" className="left-[53px] top-[15px]" />
          <Chart2 />
          <Toolbar className="left-[8px] top-[8px]" sel={3} />
        </div>
      </div>

      {/* 15 минут */}
      <div className="absolute left-0 top-[476px] flex h-[320px] w-[518px] flex-col bg-black">
        <div className="flex h-[34px] shrink-0 items-end bg-[#232323]">
          <div className="flex h-[30px] w-[18px] shrink-0 items-center justify-center"><Radio /></div>
          <Selector sym="ELLI" tf="15 минут" className="h-[30px] self-end" />
          <ChevronLeft size={13} className="mb-[9px] ml-[7px] text-[#666]" />
        </div>
        <div className="relative flex-1 overflow-hidden">
          <Mark big="ELLI" small="Ellie Mae Inc" className="left-[53px] top-[15px]" />
          <Chart3 />
          <Toolbar className="left-[10px] top-[8px]" sel={0} />
        </div>
      </div>

      {/* День */}
      <div className="absolute left-[520px] top-[476px] flex h-[320px] w-[398px] flex-col overflow-hidden bg-black">
        <div className="flex h-[33px] shrink-0 items-center bg-[#232323]">
          <div className="w-[324px] text-center text-[15px] text-[#666]">График</div>
          <div className="pl-[9px]"><Controls left /></div>
        </div>
        <div className="flex h-[22px] shrink-0 items-center bg-[#232323]">
          <div className="flex w-[18px] shrink-0 justify-center"><Radio /></div>
          <Selector sym="ELLI" tf="День" className="h-[22px]" />
        </div>
        <div className="relative flex-1 overflow-hidden">
          <Mark big="ELLI" small="Ellie Mae Inc" className="left-[54px] top-[16px]" />
          <Chart4 />
          <Toolbar className="left-[10px] top-[9px]" sel={1} />
        </div>
      </div>

      {/* SPY */}
      <div className="absolute left-[922px] top-[476px] flex h-[320px] w-[516px] flex-col bg-black">
        <div className="flex h-[34px] shrink-0 items-end bg-[#232323]">
          <div className="flex h-[30px] w-[16px] shrink-0 items-center justify-center"><Radio /></div>
          <Selector sym="SPY" tf="5 минут" className="h-[30px] self-end" />
          <ChevronLeft size={13} className="mb-[9px] ml-[7px] text-[#666]" />
        </div>
        <div className="relative flex-1 overflow-hidden">
          <Mark big="SPY" small="SPDR S&P 500" className="left-[51px] top-[15px] text-[#4c4c4c]" />
          <Chart5 />
          <Toolbar className="left-[8px] top-[8px]" sel={0} />
        </div>
      </div>

      <Account />
      <Positions />
      <Orders />
      <Stakan />
      <Quotes />
      <AllTrades />
      <Taskbar />
    </div>
  );
}
